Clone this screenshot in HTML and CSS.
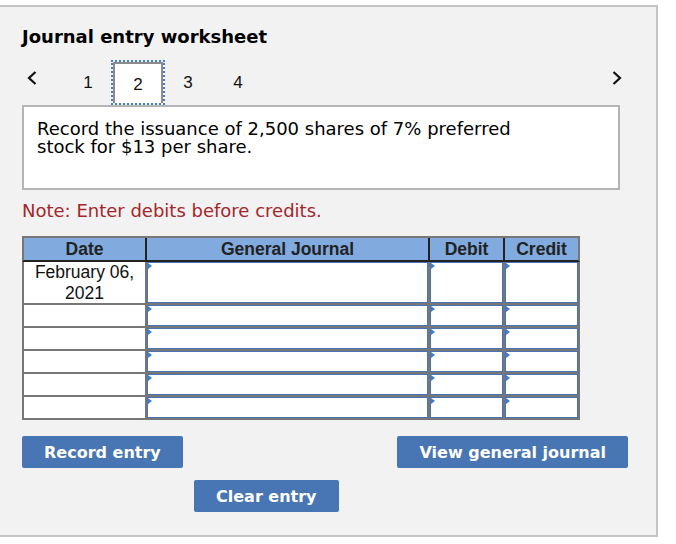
FILE: index.html
```html
<!DOCTYPE html>
<html lang="en">
<head>
    <meta charset="UTF-8">
    <meta name="viewport" content="width=device-width, initial-scale=1.0">
    <title>Journal entry worksheet</title>
    <link rel="stylesheet" href="styles.css">
</head>
<body>
    <div class="worksheet">
        <h1 class="title">Journal entry worksheet</h1>

        <div class="steps">
            <span class="arrow prev">
                <svg width="10" height="14" viewBox="0 0 10 14"><polyline points="8.5,1 2,7 8.5,13" fill="none" stroke="#111" stroke-width="2.2"/></svg>
            </span>
            <div class="tabs">
                <span class="tab">1</span>
                <span class="tab active">2</span>
                <span class="tab">3</span>
                <span class="tab">4</span>
            </div>
            <span class="arrow next">
                <svg width="10" height="14" viewBox="0 0 10 14"><polyline points="1.5,1 8,7 1.5,13" fill="none" stroke="#111" stroke-width="2.2"/></svg>
            </span>
        </div>

        <div class="question">
            <p>Record the issuance of 2,500 shares of 7% preferred stock for $13 per share.</p>
        </div>

        <p class="note">Note: Enter debits before credits.</p>

        <div class="journal">
            <div class="journal-head">
                <div>Date</div>
                <div>General Journal</div>
                <div>Debit</div>
                <div>Credit</div>
            </div>
            <div class="journal-body">
                <div class="cell date">February 06,<br>2021</div>
                <div class="cell field"></div>
                <div class="cell field"></div>
                <div class="cell field"></div>

                <div class="cell date"></div>
                <div class="cell field"></div>
                <div class="cell field"></div>
                <div class="cell field"></div>

                <div class="cell date"></div>
                <div class="cell field"></div>
                <div class="cell field"></div>
                <div class="cell field"></div>

                <div class="cell date"></div>
                <div class="cell field"></div>
                <div class="cell field"></div>
                <div class="cell field"></div>

                <div class="cell date"></div>
                <div class="cell field"></div>
                <div class="cell field"></div>
                <div class="cell field"></div>

                <div class="cell date"></div>
                <div class="cell field"></div>
                <div class="cell field"></div>
                <div class="cell field"></div>
            </div>
        </div>

        <div class="actions">
            <button class="btn">Record entry</button>
            <button class="btn">View general journal</button>
        </div>
        <div class="actions-clear">
            <button class="btn">Clear entry</button>
        </div>
    </div>
</body>
</html>
```

FILE: styles.css
```css
body {
    margin: 0;
    background-color: #fff;
    font-family: "DejaVu Sans", Verdana, sans-serif;
    color: #111;
}

.worksheet {
    box-sizing: border-box;
    width: 660px;
    height: 532px;
    margin: 5px 0 0 -2px;
    padding: 20px 28px 0 22px;
    border: 2px solid #c4c4c4;
    background-color: #f2f2f2;
}

.title {
    margin: 0;
    font-size: 18px;
    font-weight: bold;
    line-height: 20px;
    color: #000;
}

.steps {
    display: flex;
    height: 41px;
    margin-top: 15px;
}

.arrow {
    display: block;
    height: 14px;
    margin-top: 9px;
}

.arrow svg {
    display: block;
}

.prev {
    margin-left: 5px;
}

.next {
    margin-left: auto;
    margin-right: 6px;
}

.tabs {
    display: flex;
    margin-left: 26px;
}

.tab {
    box-sizing: border-box;
    width: 50px;
    height: 41px;
    padding-top: 3px;
    font-family: "Liberation Sans", Arial, sans-serif;
    font-size: 17px;
    line-height: 35px;
    text-align: center;
    color: #111;
}

.tab.active {
    border: 2px solid #8c8c8c;
    border-bottom: 0;
    background-color: #fff;
    outline: 2px dotted #4a7bc6;
}

.question {
    box-sizing: border-box;
    height: 85px;
    margin: 2px 8px 0 0;
    padding: 13px 13px 0;
    border: 2px solid #b4b4b4;
    background-color: #fff;
}

.question p {
    max-width: 520px;
    margin: 0;
    font-size: 18px;
    line-height: 17.6px;
    color: #000;
}

.note {
    margin: 10px 0 0;
    font-size: 18px;
    line-height: 21px;
    color: #a4262b;
}

.journal {
    width: 558px;
    margin-top: 15px;
    font-family: "Liberation Sans", Arial, sans-serif;
}

.journal-head,
.journal-body {
    display: grid;
    grid-template-columns: 121px 281px 73px 73px;
    gap: 2px;
    border: 2px solid #777;
}

.journal-head {
    background-color: #222;
    border-bottom-color: #222;
}

.journal-head div {
    height: 22px;
    background-color: #81aadf;
    font-size: 17.5px;
    font-weight: bold;
    line-height: 22px;
    text-align: center;
    color: #222;
}

.journal-body {
    grid-template-rows: 41px repeat(5, 21px);
    border-top: 0;
    background-color: #777;
}

.cell {
    box-sizing: border-box;
    background-color: #fff;
}

.date {
    font-size: 17.5px;
    line-height: 20.5px;
    text-align: center;
    color: #111;
}

.field {
    position: relative;
    border: 1px solid #4a73b5;
}

.field::before {
    content: "";
    position: absolute;
    top: 0;
    left: 0;
    border-left: 4px solid #3f7bd0;
    border-top: 3px solid transparent;
    border-bottom: 3px solid transparent;
}

.actions {
    display: flex;
    justify-content: space-between;
    margin-top: 16px;
}

.actions-clear {
    margin: 12px 0 0 172px;
}

.btn {
    height: 32px;
    padding: 0 22px;
    border: none;
    border-radius: 2px;
    background-color: #4876b5;
    color: #fff;
    font-family: "DejaVu Sans", Verdana, sans-serif;
    font-size: 16px;
    font-weight: bold;
    cursor: pointer;
}
```
